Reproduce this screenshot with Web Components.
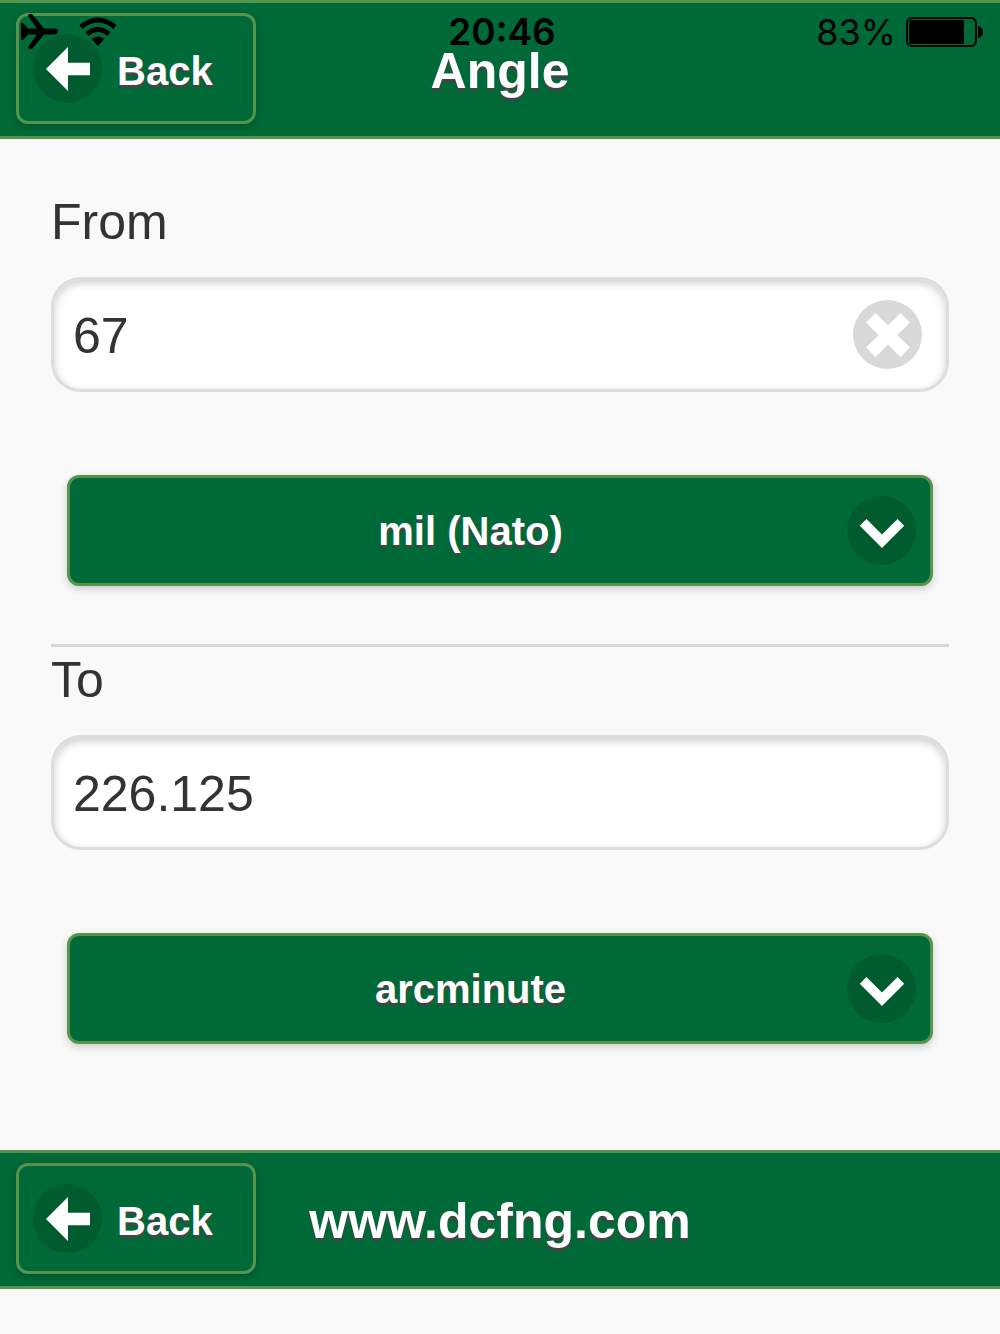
<!DOCTYPE html>
<html lang="en">
<head>
<meta charset="utf-8">
<meta name="viewport" content="width=device-width, initial-scale=1">
<title>Angle</title>
<style>
  :root {
    --green: #006938;
    --green-dark: #005c2f;
    --edge: #56934b;
    --page: #f9f9f9;
    --grey: #d9d9d9;
    --ink: #333;
    --text-shadow: 0 3px 0 #444;
    --lift: 0 3px 9px rgba(0, 0, 0, .18);
  }
  body {
    margin: 0;
    background: var(--page);
    color: var(--ink);
    font-family: "Liberation Sans", Arial, sans-serif;
    font-size: 50px;
  }
</style>
</head>
<body>
<unit-converter></unit-converter>

<script>
const ICONS = {
  back: '14,5 7,5 7,0 0,7 7,14 7,9 14,9',
  down: '11.95,3.2 7,8.15 2.05,3.2 -0.07,5.3 7,12.4 14.07,5.3',
  clear: '14,3 11,0 7,4 3,0 0,3 4,7 0,11 3,14 7,10 11,14 14,11 10,7'
};

class DiscIcon extends HTMLElement {
  connectedCallback() {
    if (this.shadowRoot) return;
    this.attachShadow({ mode: 'open' }).innerHTML = `
      <style>
        :host { display: grid; place-items: center; flex: none; width: 69px; height: 69px;
                border-radius: 50%; background: var(--disc, var(--green-dark)); }
        svg { display: block; width: 44px; height: 44px; fill: #fff; overflow: visible; }
      </style>
      <svg viewBox="0 0 14 14" aria-hidden="true"><polygon points="${ICONS[this.getAttribute('name')]}"/></svg>`;
  }
}
customElements.define('disc-icon', DiscIcon);

class BackButton extends HTMLElement {
  constructor() {
    super();
    this.attachShadow({ mode: 'open' }).innerHTML = `
      <style>
        :host { display: block; }
        button { display: flex; align-items: center; gap: 15px; box-sizing: border-box; height: 111px;
                 margin: 0; padding: 0 40px 0 14px; border: 3px solid var(--edge); border-radius: 12px;
                 background: var(--green); color: #fff; font: bold 40px/50px "Liberation Sans", Arial, sans-serif;
                 text-shadow: var(--text-shadow); box-shadow: var(--lift); cursor: pointer; }
        span { padding-top: 4px; }
      </style>
      <button type="button"><disc-icon name="back"></disc-icon><span><slot></slot></span></button>`;
    this.shadowRoot.querySelector('button').addEventListener('click', () => history.back());
  }
}
customElements.define('back-button', BackButton);

class TitleBar extends HTMLElement {
  constructor() {
    super();
    this.attachShadow({ mode: 'open' }).innerHTML = `
      <style>
        :host { display: grid; grid-template-columns: 1fr auto 1fr; align-items: center;
                padding: 10px 16px 12px; border: solid var(--edge); border-width: 3px 0;
                background: var(--green); color: #fff; }
        back-button { justify-self: start; }
        h1 { margin: 0; padding-top: 4px; font-size: 50px; line-height: 60px; text-shadow: var(--text-shadow); }
      </style>
      <back-button>Back</back-button><h1><slot></slot></h1>`;
  }
}
customElements.define('title-bar', TitleBar);

class StatusBar extends HTMLElement {
  constructor() {
    super();
    this.attachShadow({ mode: 'open' }).innerHTML = `
      <style>
        :host { display: grid; grid-template-columns: 1fr auto 1fr; align-items: center; height: 64px;
                padding: 0 16px 0 20px; box-sizing: border-box; color: #000;
                font: 36px/44px Inter, sans-serif; }
        div { display: flex; align-items: center; }
        .left { gap: 20px; }
        .right { justify-content: flex-end; gap: 10px; }
        time { font-size: 37px; font-weight: 600; }
        svg { display: block; flex: none; }
      </style>
      <div class="left">
        <svg width="39" height="36" viewBox="0 0 39 36" aria-hidden="true">
          <path d="M1 9H3L8 14.500H17L8 2Q8 0 10 0H12L24 14.500H35Q38 14.500 38 17.500T35 20.500H24L12 35H10Q8 35 8 33L17 20.500H8L3 26H1Z"/>
        </svg>
        <svg width="38" height="30" viewBox="0 0 38 30" aria-hidden="true">
          <path d="M2 10Q19 -4 36 10M8 17Q19 8 30 17" fill="none" stroke="#000" stroke-width="5"/>
          <path d="M12.500 22Q19 17 25.500 22L19 29Z"/>
        </svg>
      </div>
      <time>20:46</time>
      <div class="right"><span>83%</span>
        <svg width="78" height="30" viewBox="0 0 78 30" aria-hidden="true">
          <rect x="1" y="1" width="69" height="28" rx="5" fill="none" stroke="#000" stroke-width="2"/>
          <rect x="3" y="3" width="55" height="24" rx="2"/>
          <path d="M72 9Q77 10 77 15T72 21Z"/>
        </svg>
      </div>`;
  }
}
customElements.define('status-bar', StatusBar);

class ValueField extends HTMLElement {
  connectedCallback() {
    if (this.shadowRoot) return;
    const clearable = this.hasAttribute('clearable');
    this.attachShadow({ mode: 'open' }).innerHTML = `
      <style>
        :host { display: block; }
        label { display: block; margin-bottom: 22px; line-height: 66px; }
        .box { display: flex; align-items: center; box-sizing: border-box; height: 115px; padding: 0 24px 0 19px;
               border: 3px solid #ddd; border-radius: 30px; background: #fff;
               box-shadow: inset 0 3px 9px rgba(0, 0, 0, .2); }
        input { flex: 1; min-width: 0; height: 66px; margin: 0; padding: 2px 0 0; border: 0; outline: 0; box-sizing: border-box;
                background: none; color: inherit; font: inherit; }
        button { margin: 0; padding: 0; border: 0; background: none; --disc: var(--grey); cursor: pointer; }
      </style>
      <label for="value">${this.getAttribute('label')}</label>
      <div class="box">
        <input id="value" type="text" inputmode="decimal" value="${this.getAttribute('value')}">
        ${clearable ? '<button type="button" aria-label="Clear"><disc-icon name="clear"></disc-icon></button>' : ''}
      </div>`;
    if (clearable) {
      const input = this.shadowRoot.querySelector('input');
      this.shadowRoot.querySelector('button').addEventListener('click', () => { input.value = ''; input.focus(); });
    }
  }
}
customElements.define('value-field', ValueField);

class UnitSelect extends HTMLElement {
  connectedCallback() {
    if (this.shadowRoot) return;
    const chosen = this.getAttribute('value');
    this.attachShadow({ mode: 'open' }).innerHTML = `
      <style>
        :host { display: grid; align-items: center; }
        select, disc-icon { grid-area: 1 / 1; }
        select { appearance: none; box-sizing: border-box; width: 100%; height: 111px; margin: 0; padding: 0 97px 0 38px;
                 border: 3px solid var(--edge); border-radius: 12px; background: var(--green); color: #fff;
                 font: bold 40px/50px "Liberation Sans", Arial, sans-serif; text-align: center; text-align-last: center;
                 text-shadow: var(--text-shadow); box-shadow: var(--lift); cursor: pointer; }
        disc-icon { justify-self: end; margin-right: 17px; pointer-events: none; z-index: 1; }
      </style>
      <select aria-label="${this.getAttribute('label')}"><option selected>${chosen}</option></select>
      <disc-icon name="down"></disc-icon>`;
  }
}
customElements.define('unit-select', UnitSelect);

class UnitConverter extends HTMLElement {
  constructor() {
    super();
    this.attachShadow({ mode: 'open' }).innerHTML = `
      <style>
        :host { display: block; position: relative; }
        status-bar { position: absolute; inset: 0 0 auto; pointer-events: none; }
        main { padding: 50px 51px 106px; }
        unit-select { margin: 83px 16px 0; }
        hr { height: 3px; margin: 58px 0 0; border: 0; background: var(--grey); }
      </style>
      <header><title-bar>Angle</title-bar></header>
      <status-bar></status-bar>
      <main>
        <value-field label="From" value="67" clearable></value-field>
        <unit-select label="From unit" value="mil (Nato)"></unit-select>
        <hr>
        <value-field label="To" value="226.125"></value-field>
        <unit-select label="To unit" value="arcminute"></unit-select>
      </main>
      <footer><title-bar>www.dcfng.com</title-bar></footer>`;
  }
}
customElements.define('unit-converter', UnitConverter);
</script>
</body>
</html>
